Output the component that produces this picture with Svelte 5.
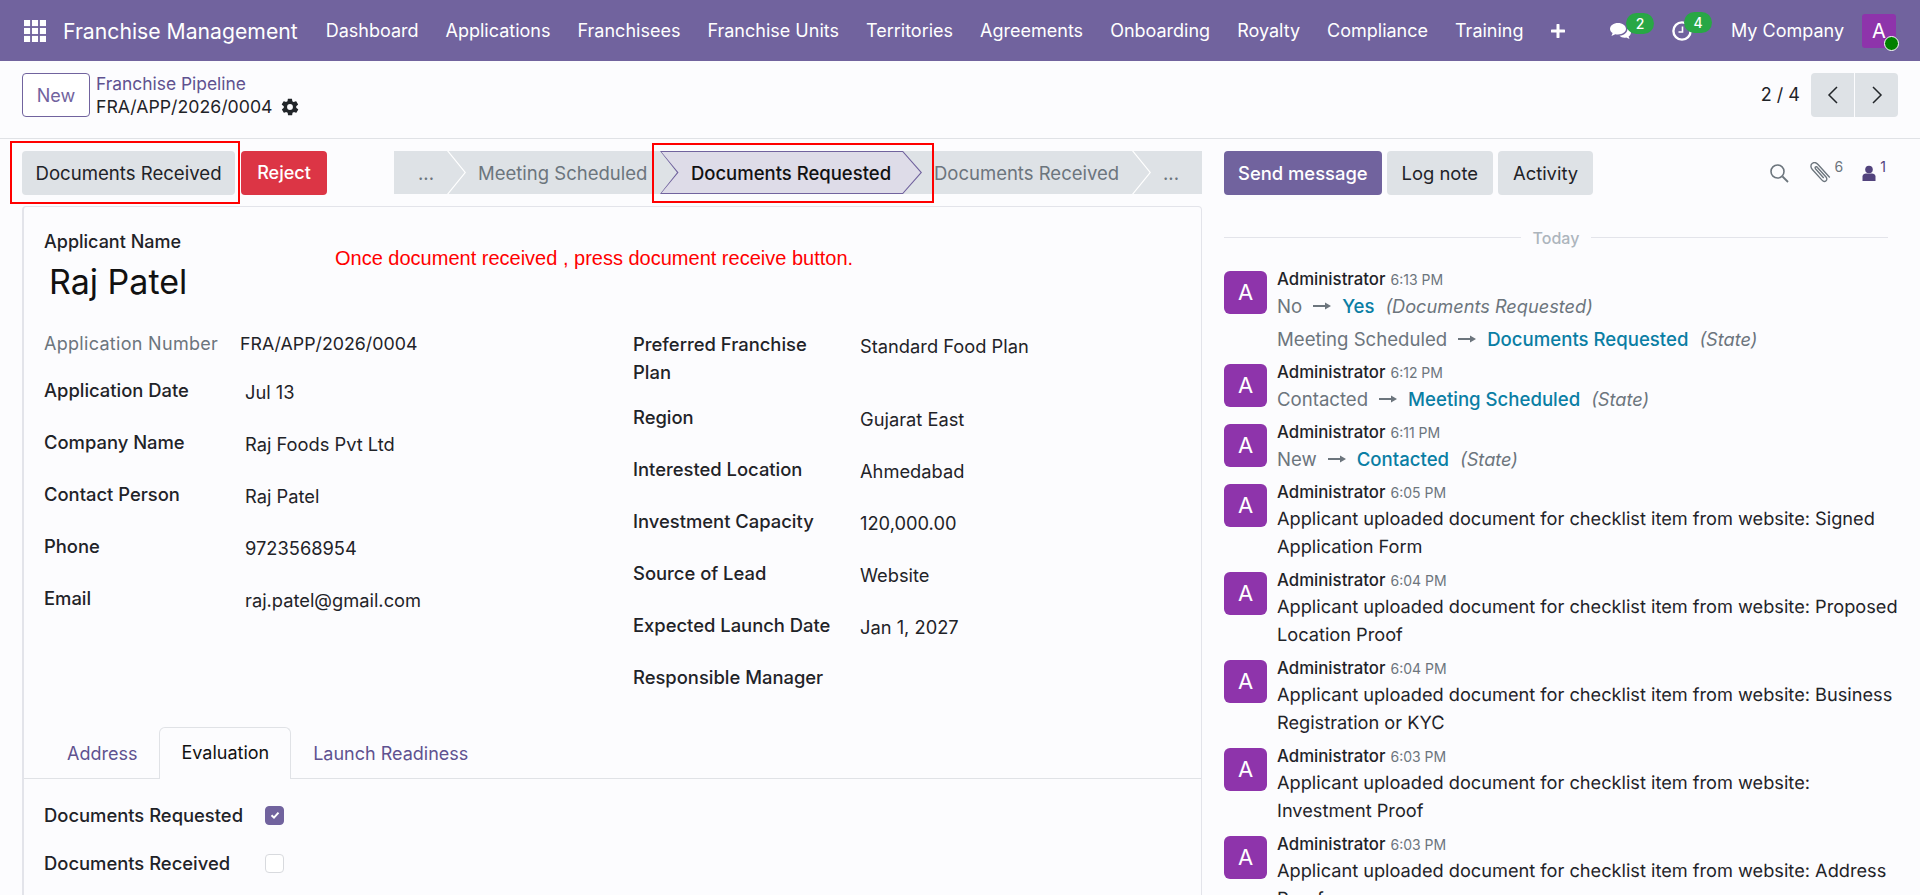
<script lang="ts">
  const menus = ['Dashboard', 'Applications', 'Franchisees', 'Franchise Units', 'Territories', 'Agreements', 'Onboarding', 'Royalty', 'Compliance', 'Training'];

  const leftFields = [
    { label: 'Application Date', value: 'Jul 13' },
    { label: 'Company Name', value: 'Raj Foods Pvt Ltd' },
    { label: 'Contact Person', value: 'Raj Patel' },
    { label: 'Phone', value: '9723568954' },
    { label: 'Email', value: 'raj.patel@gmail.com' }
  ];

  const rightFields = [
    { label: 'Region', value: 'Gujarat East' },
    { label: 'Interested Location', value: 'Ahmedabad' },
    { label: 'Investment Capacity', value: '120,000.00' },
    { label: 'Source of Lead', value: 'Website' },
    { label: 'Expected Launch Date', value: 'Jan 1, 2027' },
    { label: 'Responsible Manager', value: '' }
  ];

  const changes = [
    {
      time: '6:13 PM',
      rows: [
        { from: 'No', to: 'Yes', field: 'Documents Requested' },
        { from: 'Meeting Scheduled', to: 'Documents Requested', field: 'State' }
      ]
    },
    { time: '6:12 PM', rows: [{ from: 'Contacted', to: 'Meeting Scheduled', field: 'State' }] },
    { time: '6:11 PM', rows: [{ from: 'New', to: 'Contacted', field: 'State' }] }
  ];

  const uploads = [
    { time: '6:05 PM', doc: 'Signed Application Form' },
    { time: '6:04 PM', doc: 'Proposed Location Proof' },
    { time: '6:04 PM', doc: 'Business Registration or KYC' },
    { time: '6:03 PM', doc: 'Investment Proof' },
    { time: '6:03 PM', doc: 'Address Proof' }
  ];
</script>

<div class="page">
  <header class="navbar">
    <svg class="apps" viewBox="0 0 18 18" width="22" height="22" aria-hidden="true">
      {#each [0, 6.5, 13] as y}
        {#each [0, 6.5, 13] as x}
          <rect {x} {y} width="5" height="5" fill="#fff" />
        {/each}
      {/each}
    </svg>
    <span class="brand">Franchise Management</span>
    <nav class="menu">
      {#each menus as m}
        <span>{m}</span>
      {/each}
      <svg viewBox="0 0 14 14" width="14" height="14" aria-hidden="true"><path d="M7 1v12M1 7h12" stroke="#fff" stroke-width="3" stroke-linecap="round" /></svg>
    </nav>
    <div class="systray">
      <span class="tray-icon">
        <svg viewBox="0 0 24 20" width="24" height="20" aria-hidden="true">
          <path d="M9 2C4.6 2 1 4.6 1 7.8c0 1.7 1 3.2 2.6 4.3L2.5 15l3.8-1.8c.9.2 1.8.3 2.7.3 4.4 0 8-2.6 8-5.7S13.4 2 9 2z" fill="#fff" />
          <path d="M18.5 7.5c.3 3.4-3 6.8-8 7.3 1.2 1.2 3 1.9 5 1.9.6 0 1.1 0 1.7-.2l3.3 1.5-.9-2.5c1.5-1 2.4-2.3 2.4-3.8 0-1.7-1.4-3.2-3.5-3.7z" fill="#fff" />
        </svg>
        <b class="badge">2</b>
      </span>
      <span class="tray-icon clock">
        <svg viewBox="0 0 22 22" width="22" height="22" aria-hidden="true">
          <circle cx="11" cy="11" r="8.6" fill="none" stroke="#fff" stroke-width="2.4" />
          <path d="M11.5 6.5V12H7.5" fill="none" stroke="#fff" stroke-width="1.6" />
        </svg>
        <b class="badge">4</b>
      </span>
      <span class="company">My Company</span>
      <span class="nav-avatar">A<i class="online"></i></span>
    </div>
  </header>

  <div class="control">
    <div class="control-left">
      <button class="btn-new">New</button>
      <div class="crumbs">
        <div class="crumb-link">Franchise Pipeline</div>
        <div class="crumb-current">
          FRA/APP/2026/0004
          <svg viewBox="0 0 24 24" width="20" height="20" aria-hidden="true"><path fill="#212529" d="M19.4 13c.1-.3.1-.7.1-1s0-.7-.1-1l2.1-1.6c.2-.2.2-.4.1-.6l-2-3.5c-.1-.2-.4-.3-.6-.2l-2.5 1c-.5-.4-1.1-.7-1.7-1l-.4-2.6c0-.3-.2-.5-.5-.5h-4c-.3 0-.5.2-.5.4l-.4 2.7c-.6.2-1.1.6-1.7 1l-2.5-1c-.2-.1-.5 0-.6.2l-2 3.5c-.1.2-.1.5.1.6L4.6 11c0 .3-.1.7-.1 1s0 .7.1 1l-2.1 1.6c-.2.2-.2.4-.1.6l2 3.5c.1.2.4.3.6.2l2.5-1c.5.4 1.1.7 1.7 1l.4 2.6c0 .3.2.5.5.5h4c.3 0 .5-.2.5-.4l.4-2.7c.6-.2 1.2-.6 1.7-1l2.5 1c.2.1.5 0 .6-.2l2-3.5c.1-.2.1-.5-.1-.6L19.4 13zM12 15.5a3.5 3.5 0 1 1 0-7 3.5 3.5 0 0 1 0 7z" /></svg>
        </div>
      </div>
    </div>
    <div class="pager">
      <span class="pager-count">2 / 4</span>
      <div class="pager-btns">
        <button aria-label="Previous"><svg viewBox="0 0 12 20" width="12" height="20"><path d="M10 2 2 10l8 8" fill="none" stroke="#212529" stroke-width="1.5" /></svg></button>
        <button aria-label="Next"><svg viewBox="0 0 12 20" width="12" height="20"><path d="m2 2 8 8-8 8" fill="none" stroke="#212529" stroke-width="1.5" /></svg></button>
      </div>
    </div>
  </div>

  <div class="content">
    <main class="form-side">
      <div class="statusbar">
        <div class="status-actions">
          <button class="btn-grey marked">Documents Received</button>
          <button class="btn-reject">Reject</button>
        </div>
        <div class="pipeline">
          <span class="step dots">...</span>
          <span class="step meeting">Meeting Scheduled</span>
          <span class="step current">Documents Requested</span>
          <span class="step received">Documents Received</span>
          <span class="step dots last">...</span>
        </div>
      </div>

      <section class="sheet">
        <div class="sheet-head">
          <div class="title-block">
            <div class="name-label">Applicant Name</div>
            <div class="name">Raj Patel</div>
          </div>
          <div class="note">Once document received , press document receive button.</div>
        </div>

        <div class="groups">
          <div class="group left">
            <div class="field first">
              <span class="label muted">Application Number</span>
              <span class="value">FRA/APP/2026/0004</span>
            </div>
            {#each leftFields as f}
              <div class="field">
                <span class="label">{f.label}</span>
                <span class="value indent">{f.value}</span>
              </div>
            {/each}
          </div>
          <div class="group right">
            <div class="field plan">
              <span class="label">Preferred Franchise Plan</span>
              <span class="value">Standard Food Plan</span>
            </div>
            {#each rightFields as f}
              <div class="field">
                <span class="label">{f.label}</span>
                <span class="value">{f.value}</span>
              </div>
            {/each}
          </div>
        </div>

        <div class="tabs">
          <span class="tab">Address</span>
          <span class="tab active">Evaluation</span>
          <span class="tab">Launch Readiness</span>
        </div>

        <div class="checks">
          <div class="check-row">
            <span class="label">Documents Requested</span>
            <span class="box on">
              <svg viewBox="0 0 12 12" width="12" height="12" aria-hidden="true"><path d="m2.5 6.2 2.5 2.4 4.5-5" fill="none" stroke="#fff" stroke-width="2" /></svg>
            </span>
          </div>
          <div class="check-row">
            <span class="label">Documents Received</span>
            <span class="box"></span>
          </div>
        </div>
      </section>
    </main>

    <aside class="chatter">
      <div class="chatter-top">
        <div class="chatter-btns">
          <button class="btn-send">Send message</button>
          <button class="btn-grey">Log note</button>
          <button class="btn-grey">Activity</button>
        </div>
        <div class="chatter-icons">
          <svg class="ic-search" viewBox="0 0 20 20" width="20" height="20" aria-hidden="true"><circle cx="8.5" cy="8.5" r="6.5" fill="none" stroke="#6c757d" stroke-width="1.6" /><path d="m13.5 13.5 5.5 5.5" stroke="#6c757d" stroke-width="1.8" /></svg>
          <span class="icon-count">
            <svg viewBox="3 3 17 17" width="21" height="21" aria-hidden="true"><path d="M19 15.5 9.5 5c-1.5-1.6-3.5-1.9-4.8-.7-1.4 1.2-1.2 3.2.2 4.8l7.8 8.6c1 1.1 2.4 1.3 3.3.5.9-.8.8-2.2-.2-3.3L9 7.4c-.5-.6-1.2-.7-1.6-.3-.4.4-.3 1 .2 1.6l6.5 7.2" fill="none" stroke="#6c757d" stroke-width="1.1" /></svg>
            <sup>6</sup>
          </span>
          <span class="icon-count follower">
            <svg viewBox="0 0 14 16" width="14" height="16" aria-hidden="true"><circle cx="7" cy="4.5" r="3.8" fill="#52437d" /><path d="M.5 16v-4.5c0-1.7 1.8-3 3.5-3h6c1.7 0 3.5 1.3 3.5 3V16z" fill="#52437d" /></svg>
            <sup>1</sup>
          </span>
        </div>
      </div>

      <div class="today"><span>Today</span></div>

      {#each changes as msg}
        <div class="msg">
          <div class="avatar">A</div>
          <div class="msg-body">
            <div class="msg-head"><b>Administrator</b><small>{msg.time}</small></div>
            {#each msg.rows as r}
              <div class="change">
                <span class="from">{r.from}</span>
                <svg viewBox="0 0 18 10" width="18" height="10" aria-hidden="true"><path d="M0 5h13" stroke="#6c757d" stroke-width="2" /><path d="M12 1.5 18 5l-6 3.5z" fill="#6c757d" /></svg>
                <span class="to">{r.to}</span>
                <em>({r.field})</em>
              </div>
            {/each}
          </div>
        </div>
      {/each}

      {#each uploads as msg}
        <div class="msg">
          <div class="avatar">A</div>
          <div class="msg-body">
            <div class="msg-head"><b>Administrator</b><small>{msg.time}</small></div>
            <p>Applicant uploaded document for checklist item from website: {msg.doc}</p>
          </div>
        </div>
      {/each}
    </aside>
  </div>

  <!-- red annotation rectangles drawn on top of the screenshot -->
  <div class="mark mark-a"></div>
  <div class="mark mark-b"></div>
</div>

<style>
  :global(body) {
    margin: 0;
    background: #fcfcfe;
    color: #1f2328;
    font-family: Inter, "Noto Sans", sans-serif;
    font-size: 18.4px;
    overflow: hidden;
  }

  button {
    font: inherit;
    border: 0;
    cursor: pointer;
  }

  .page {
    position: relative;
    height: 895px;
    overflow: hidden;
  }

  .navbar {
    display: flex;
    align-items: center;
    height: 61px;
    padding: 0 24px 0 24px;
    background: #71639e;
    color: #fff;
    box-sizing: border-box;
    font-size: 18px;
  }

  .apps {
    flex: none;
    margin-right: 17px;
  }

  .brand {
    font-size: 21.2px;
    margin-right: 28px;
    white-space: nowrap;
  }

  .menu {
    display: flex;
    align-items: center;
    gap: 27px;
    white-space: nowrap;
  }

  .systray {
    display: flex;
    align-items: center;
    margin-left: auto;
  }

  .tray-icon {
    position: relative;
    display: flex;
    margin-right: 38px;
  }

  .tray-icon.clock {
    margin-right: 38px;
  }

  .badge {
    position: absolute;
    left: 17px;
    top: -8px;
    min-width: 28px;
    height: 21px;
    line-height: 21px;
    border-radius: 11px;
    background: #28a745;
    font-size: 14px;
    font-weight: 500;
    text-align: center;
  }

  .clock .badge {
    left: 13px;
  }

  .company {
    margin-right: 18px;
  }

  .nav-avatar {
    position: relative;
    width: 34px;
    height: 34px;
    line-height: 34px;
    border-radius: 3px;
    background: #8e34ab;
    text-align: center;
    font-size: 20px;
  }

  .online {
    position: absolute;
    right: -3px;
    bottom: -3px;
    width: 13px;
    height: 13px;
    border: 1.5px solid #fff;
    border-radius: 50%;
    background: #008000;
  }

  .control {
    display: flex;
    justify-content: space-between;
    height: 78px;
    padding: 12px 22px 0 22px;
    box-sizing: border-box;
    border-bottom: 1px solid #e0e2e6;
  }

  .control-left {
    display: flex;
    gap: 6px;
  }

  .btn-new {
    width: 68px;
    height: 44px;
    border: 1px solid #71639e;
    border-radius: 4px;
    background: #fff;
    color: #71639e;
    font-size: 18px;
  }

  .crumbs {
    line-height: 24px;
    font-size: 17.7px;
  }

  .crumb-link {
    color: #5f5290;
    font-size: 17.4px;
    margin-top: -1px;
  }

  .crumb-current {
    display: flex;
    align-items: center;
    gap: 8px;
    margin-top: -1px;
  }

  .pager {
    display: flex;
    align-items: flex-start;
    gap: 11px;
  }

  .pager-count {
    line-height: 44px;
    font-size: 18px;
  }

  .pager-btns {
    display: flex;
    gap: 1px;
  }

  .pager-btns button {
    display: flex;
    align-items: center;
    justify-content: center;
    width: 43px;
    height: 44px;
    background: #dee2e6;
    padding: 0;
  }

  .pager-btns button:first-child {
    border-radius: 4px 0 0 4px;
  }

  .pager-btns button:last-child {
    border-radius: 0 4px 4px 0;
  }

  .content {
    display: flex;
  }

  .form-side {
    width: 1204px;
    flex: none;
    box-sizing: border-box;
    padding-left: 22px;
  }

  .statusbar {
    display: flex;
    align-items: center;
    justify-content: space-between;
    height: 67px;
    padding: 0 2px 0 0;
  }

  .status-actions {
    display: flex;
    gap: 6px;
  }

  .btn-grey {
    height: 44px;
    padding: 0 15px;
    border-radius: 4px;
    background: #dee2e6;
    color: #1f2328;
  }

  .btn-reject {
    height: 44px;
    width: 86px;
    padding: 0;
    border-radius: 4px;
    background: #dc3545;
    color: #fff;
    font-weight: 500;
    font-size: 18px;
  }

  .marked {
    width: 213px;
    padding: 0;
    font-size: 18.6px;
  }

  .pipeline {
    display: flex;
    height: 43px;
    width: 808px;
    background: #dee2e6;
    color: #6c757d;
    white-space: nowrap;
    font-size: 18.5px;
  }

  .step {
    position: relative;
    display: flex;
    align-items: center;
    box-sizing: border-box;
    flex: none;
  }

  .dots {
    width: 53px;
    padding-left: 24px;
  }

  .meeting {
    width: 213px;
    padding-left: 31px;
  }

  .received {
    width: 210px;
    padding-left: 12px;
  }

  .dots.last {
    width: 70px;
    padding-left: 31px;
  }

  .dots::after,
  .received::after {
    content: "";
    position: absolute;
    top: 0;
    left: 100%;
    width: 19px;
    height: 43px;
    background: #fff;
    clip-path: polygon(0 0, 1.5px 0, 19px 50%, 1.5px 100%, 0 100%, 17.5px 50%);
    z-index: 2;
  }

  .dots.last::after {
    display: none;
  }

  .current {
    justify-content: center;
    width: 262px;
    color: #111;
    font-weight: 500;
    background: #71639e;
    clip-path: polygon(0 0, 243px 0, 100% 50%, 243px 100%, 0 100%, 17px 50%);
    isolation: isolate;
  }

  .current::before {
    content: "";
    position: absolute;
    inset: 0;
    background: #dedce8;
    clip-path: polygon(1.5px 1px, 242.5px 1px, 260.5px 50%, 242.5px calc(100% - 1px), 1.5px calc(100% - 1px), 18.5px 50%);
    z-index: -1;
  }

  .sheet {
    height: 700px;
    width: 1180px;
    border: 1px solid #e3e4ea;
    border-left-width: 2px;
    border-radius: 4px 4px 0 0;
    box-sizing: border-box;
  }

  .sheet-head {
    display: flex;
    padding: 22px 0 0 20px;
    height: 95px;
    box-sizing: border-box;
  }

  .title-block {
    width: 291px;
    flex: none;
  }

  .name-label {
    font-weight: 500;
    line-height: 26px;
    font-size: 18px;
  }

  .name {
    font-size: 34px;
    font-weight: 400;
    line-height: 44px;
    margin: 5px 0 0 5px;
    color: #111;
  }

  .note {
    color: #ff0000;
    font-family: "Liberation Sans", Arial, sans-serif;
    font-size: 20px;
    line-height: 24px;
    margin-top: 17px;
  }

  .groups {
    display: flex;
    padding: 28px 0 0 20px;
    height: 425px;
    box-sizing: border-box;
  }

  .group.left {
    width: 589px;
    flex: none;
  }

  .field {
    display: flex;
    height: 52px;
    line-height: 28px;
  }

  .field.first {
    height: 46px;
  }

  .field.plan {
    height: 73px;
  }

  .value {
    font-size: 18.3px;
  }

  .first .value {
    font-size: 17.8px;
  }

  .label {
    font-weight: 500;
    color: #1f2328;
  }

  .label.muted {
    font-weight: 400;
    color: #6c757d;
    font-size: 18px;
    letter-spacing: .3px;
  }

  .left .label {
    width: 196px;
    flex: none;
  }

  .right .label {
    width: 227px;
    flex: none;
    box-sizing: border-box;
    padding-right: 20px;
  }

  .indent {
    padding-left: 5px;
    line-height: 33px;
  }

  .right .value {
    line-height: 32px;
  }

  .tabs {
    display: flex;
    align-items: flex-end;
    height: 51px;
    padding-left: 21px;
    border-bottom: 1px solid #e0e2e6;
    color: #5f5290;
    font-size: 18px;
  }

  .tab {
    padding: 0 21px;
    line-height: 50px;
    height: 50px;
    margin-bottom: -1px;
    border: 1px solid transparent;
    border-bottom: 0;
  }

  .tab.active {
    color: #111;
    background: #fcfcfe;
    height: 51px;
    border-color: #e0e2e6;
    border-radius: 6px 6px 0 0;
  }

  .checks {
    padding: 12px 0 0 20px;
  }

  .check-row {
    display: flex;
    align-items: center;
    height: 48px;
  }

  .check-row .label {
    width: 221px;
  }

  .box {
    display: flex;
    align-items: center;
    justify-content: center;
    width: 19px;
    height: 19px;
    box-sizing: border-box;
    border: 1px solid #d8dade;
    border-radius: 4px;
    background: #fff;
  }

  .box.on {
    background: #71639e;
    border-color: #71639e;
  }

  .chatter {
    flex: 1;
    padding: 0 17px 0 20px;
    min-width: 0;
  }

  .chatter-top {
    display: flex;
    align-items: center;
    justify-content: space-between;
    height: 67px;
  }

  .chatter-btns {
    display: flex;
    gap: 5px;
  }

  .btn-send {
    height: 44px;
    padding: 0 14px;
    border-radius: 4px;
    background: #71639e;
    color: #fff;
    font-weight: 500;
  }

  .chatter-icons {
    display: flex;
    align-items: center;
    gap: 19px;
    margin-right: 17px;
  }

  .ic-search {
    margin-right: 2px;
  }

  .icon-count {
    display: flex;
    align-items: center;
  }

  sup {
    font-size: 14px;
    color: #6c757d;
    margin: -12px 0 0 4px;
    line-height: 1;
  }

  .follower sup {
    color: #52437d;
  }

  .today {
    display: flex;
    align-items: center;
    gap: 12px;
    margin: 0 15px 0 0;
    height: 63px;
    color: #adb5bd;
    font-size: 16px;
    font-weight: 500;
  }

  .today::before,
  .today::after {
    content: "";
    flex: 1;
    height: 1.5px;
    background: #e3e4ea;
  }

  .msg {
    display: flex;
    gap: 10px;
    margin-bottom: 9px;
  }

  .avatar {
    flex: none;
    width: 43px;
    height: 43px;
    line-height: 43px;
    margin-top: 2px;
    border-radius: 6px;
    background: #8e34ab;
    color: #fff;
    text-align: center;
    font-size: 22px;
  }

  .msg-body {
    flex: 1;
    min-width: 0;
  }

  .msg-head {
    display: flex;
    align-items: baseline;
    gap: 5px;
    height: 20px;
    line-height: 20px;
  }

  .msg-head b {
    font-size: 16.8px;
    font-weight: 500;
  }

  .msg-head small {
    font-size: 14px;
    color: #6c757d;
  }

  .msg-body p {
    margin: 3px 0 0;
    line-height: 28px;
    font-size: 18.2px;
    text-rendering: geometricPrecision;
  }

  .change {
    display: flex;
    align-items: center;
    height: 28px;
    margin-top: 3px;
    gap: 11px;
    color: #6c757d;
    white-space: nowrap;
    font-size: 18.6px;
  }

  .change + .change {
    margin-top: 5px;
  }

  .to {
    color: #0a7ea4;
    font-weight: 500;
  }

  .change em {
    margin-left: 0;
    font-size: 18.2px;
  }

  .mark {
    position: absolute;
    border: 2.5px solid #f00;
    box-sizing: border-box;
    pointer-events: none;
  }

  .mark-a {
    left: 10px;
    top: 141px;
    width: 230px;
    height: 63px;
  }

  .mark-b {
    left: 652px;
    top: 143px;
    width: 282px;
    height: 60px;
  }
</style>
